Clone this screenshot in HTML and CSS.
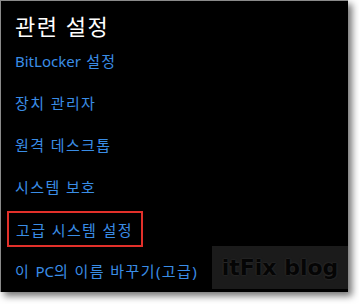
FILE: index.html
```html
<!DOCTYPE html>
<html>
<head>
<meta charset="utf-8">
<title>관련 설정</title>
<link rel="stylesheet" href="styles.css">
</head>
<body>
<div class="panel">
	<div class="title">관련 설정</div>
	<div class="row"><span class="link"><span class="lat">BitLocker</span> 설정</span></div>
	<div class="row"><span class="link">장치 관리자</span></div>
	<div class="row"><span class="link">원격 데스크톱</span></div>
	<div class="row"><span class="link">시스템 보호</span></div>
	<div class="row"><span class="link hl">고급 시스템 설정</span></div>
	<div class="row"><span class="link">이 <span class="lat">PC</span>의 이름 바꾸기(고급)</span></div>
	<div class="mark">itFix blog</div>
</div>
</body>
</html>
```

FILE: styles.css
```css
body {
	margin: 0;
	background: #ffffff;
	width: 359px;
	height: 304px;
	overflow: hidden;
}
.panel {
	position: relative;
	width: 348px;
	height: 292px;
	background: #000000;
	border-top: 1px solid #8a8a8a;
	border-left: 1px solid #8a8a8a;
	padding-top: 11px;
	box-sizing: border-box;
	box-shadow: 4px 4px 7px rgba(0, 0, 0, 0.55);
	font-family: "Noto Sans", "Noto Sans CJK KR", sans-serif;
}
.title {
	height: 28px;
	line-height: 28px;
	padding-left: 14px;
	color: #ffffff;
	font-size: 22px;
	letter-spacing: 1.5px;
}
.row {
	height: 42px;
	display: flex;
	align-items: center;
	padding-left: 14px;
}
.link {
	color: #3a8de6;
	font-size: 15px;
	line-height: 20px;
	letter-spacing: 1.4px;
}
.lat {
	letter-spacing: 0;
}
.hl {
	margin-left: -8px;
	padding: 7px 8px 5px 7px;
	border: 2px solid #e2302a;
}
.mark {
	position: absolute;
	left: 211px;
	top: 245px;
	width: 136px;
	height: 43px;
	background: #1b1b1b;
	color: #050505;
	font-family: "DejaVu Sans", sans-serif;
	font-weight: bold;
	font-size: 22px;
	line-height: 43px;
	text-align: center;
	text-shadow: 0 0 2px #3a3a3a;
}
```
